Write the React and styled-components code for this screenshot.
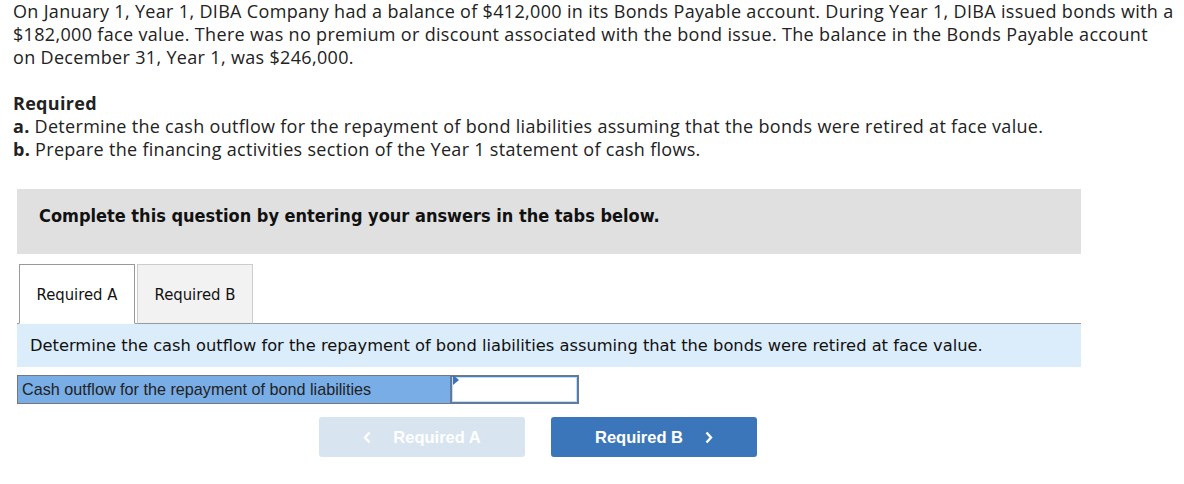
import React from "react";
import styled, { createGlobalStyle } from "styled-components";

const Global = createGlobalStyle`
  html, body { margin: 0; padding: 0; background: #fff; }
  body { width: 1184px; height: 484px; overflow: hidden; }
`;

const Page = styled.div`
  padding: 0 0 0 13px;
  width: 1168px;
  color: #222;
`;

const Para = styled.p`
  margin: 0;
  font-family: "Open Sans", Lato, sans-serif;
  font-size: 18px;
  letter-spacing: 0.33px;
  line-height: 23px;
  color: #222;
`;

const Line = styled.span`
  display: block;
  white-space: nowrap;
`;

const ReqBlock = styled.div`
  margin-top: 23px;
  font-family: "Open Sans", Lato, sans-serif;
  font-size: 18px;
  letter-spacing: 0.3px;
  line-height: 23px;
  color: #222;
`;

const Strong = styled.strong`
  font-weight: 700;
`;

const Workspace = styled.div`
  margin: 28px 0 0 4px;
  width: 1064px;
`;

const Banner = styled.div`
  height: 65px;
  box-sizing: border-box;
  padding: 16px 22px 0;
  background: #e0e0e0;
  font-family: "DejaVu Sans Condensed", "DejaVu Sans", Tahoma, sans-serif;
  font-stretch: condensed;
  font-weight: 700;
  font-size: 18px;
  line-height: 22px;
  color: #111;
  white-space: nowrap;
`;

const TabList = styled.div`
  display: flex;
  gap: 2px;
  margin-top: 10px;
  padding-left: 2px;
  border-bottom: 1px solid #999;
`;

const Tab = styled.div`
  width: 116px;
  height: 60px;
  box-sizing: border-box;
  display: flex;
  align-items: center;
  justify-content: center;
  margin-bottom: -1px;
  font-family: "DejaVu Sans Condensed", "DejaVu Sans", Tahoma, sans-serif;
  font-stretch: condensed;
  font-size: 16.5px;
  color: #111;
  border: 1px solid ${(p) => (p.$active ? "#999" : "#ccc")};
  border-bottom: ${(p) => (p.$active ? "1px solid #fff" : "1px solid #999")};
  background: ${(p) => (p.$active ? "#fff" : "#f2f2f2")};
`;

const Instruction = styled.div`
  height: 43px;
  box-sizing: border-box;
  padding: 11px 13px 0;
  background: #dbecfa;
  font-family: "DejaVu Sans", Verdana, sans-serif;
  font-size: 16.3px;
  line-height: 22px;
  color: #111;
  white-space: nowrap;
`;

const AnswerRow = styled.div`
  display: flex;
  width: 562px;
  height: 29px;
  box-sizing: border-box;
  margin-top: 8px;
  border: 1px solid #777;
`;

const Label = styled.div`
  width: 433px;
  box-sizing: border-box;
  padding-left: 4px;
  display: flex;
  align-items: center;
  background: #79ade6;
  border-right: 1px solid #777;
  font-family: "Liberation Sans", Arial, sans-serif;
  font-size: 16.2px;
  color: #222;
  white-space: nowrap;
`;

const InputCell = styled.div`
  position: relative;
  flex: 1;
  background: #fff;
  border: 1px solid #4a7ebf;
  box-shadow: inset 0 0 0 1px #c8dcf3;
`;

const Flag = styled.span`
  position: absolute;
  left: 1px;
  top: -2px;
  width: 0;
  height: 0;
  border-top: 5px solid transparent;
  border-bottom: 5px solid transparent;
  border-left: 6px solid #3b73b9;
`;

const Input = styled.input`
  width: 100%;
  height: 100%;
  box-sizing: border-box;
  border: 0;
  outline: none;
  background: transparent;
  padding: 0 6px;
  font-family: "Liberation Sans", Arial, sans-serif;
  font-size: 15px;
`;

const Nav = styled.div`
  display: flex;
  gap: 26px;
  margin-top: 13px;
  padding-left: 302px;
`;

const NavButton = styled.button`
  width: 206px;
  height: 40px;
  border: 0;
  border-radius: 3px;
  display: flex;
  align-items: center;
  justify-content: center;
  gap: 22px;
  background: ${(p) => (p.disabled ? "#d9e4f1" : "#3b76ba")};
  color: #fff;
  font-family: "Liberation Sans", Arial, sans-serif;
  font-weight: 700;
  font-size: 16.5px;
  cursor: ${(p) => (p.disabled ? "default" : "pointer")};
  padding: 0;
`;

const Chevron = ({ dir }) => (
  <svg width="8" height="13" viewBox="0 0 8 13" aria-hidden="true">
    <path
      d={dir === "left" ? "M6.5 1.5 L2 6.5 L6.5 11.5" : "M1.5 1.5 L6 6.5 L1.5 11.5"}
      fill="none"
      stroke="#fff"
      strokeWidth="2.4"
    />
  </svg>
);

export default function App() {
  return (
    <Page>
      <Global />
      <Para>
        <Line>On January 1, Year 1, DIBA Company had a balance of $412,000 in its Bonds Payable account. During Year 1, DIBA issued bonds with a</Line>
        <Line>$182,000 face value. There was no premium or discount associated with the bond issue. The balance in the Bonds Payable account</Line>
        <Line>on December 31, Year 1, was $246,000.</Line>
      </Para>
      <ReqBlock>
        <Strong>Required</Strong>
        <Line>
          <Strong>a.</Strong> Determine the cash outflow for the repayment of bond liabilities assuming that the bonds were retired at face value.
        </Line>
        <Line>
          <Strong>b.</Strong> Prepare the financing activities section of the Year 1 statement of cash flows.
        </Line>
      </ReqBlock>
      <Workspace>
        <Banner>Complete this question by entering your answers in the tabs below.</Banner>
        <TabList>
          <Tab $active>Required A</Tab>
          <Tab>Required B</Tab>
        </TabList>
        <Instruction>
          Determine the cash outflow for the repayment of bond liabilities assuming that the bonds were retired at face value.
        </Instruction>
        <AnswerRow>
          <Label>Cash outflow for the repayment of bond liabilities</Label>
          <InputCell>
            <Flag />
            <Input aria-label="Cash outflow for the repayment of bond liabilities" />
          </InputCell>
        </AnswerRow>
        <Nav>
          <NavButton disabled>
            <Chevron dir="left" />
            Required A
          </NavButton>
          <NavButton>
            Required B
            <Chevron dir="right" />
          </NavButton>
        </Nav>
      </Workspace>
    </Page>
  );
}
